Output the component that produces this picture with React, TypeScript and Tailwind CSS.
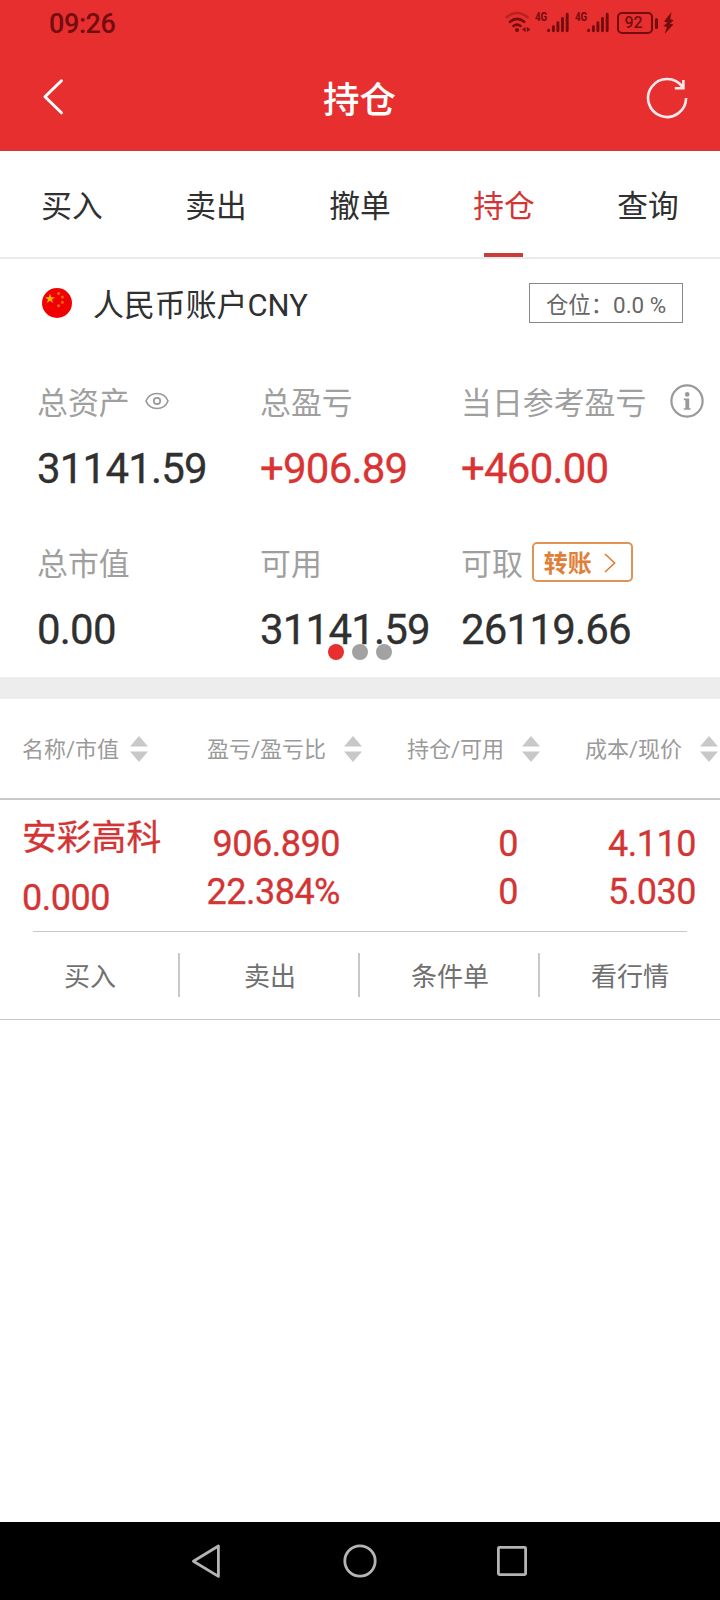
import React from 'react';

const tabs = ['买入', '卖出', '撤单', '持仓', '查询'];

const actions = ['买入', '卖出', '条件单', '看行情'];

const SignalIcon: React.FC = () => (
  <div className="relative h-6 w-[35px]">
    <span className="absolute -top-px left-0 origin-left scale-x-75 text-[13px] leading-[14px] font-bold">4G</span>
    <svg className="absolute left-3 top-0" width="23" height="24" viewBox="0 0 23 24" stroke="currentColor" strokeWidth="2.9" strokeLinecap="round">
      <path d="M1.6 19.2v.6M6.4 15.6v4.2M10.9 11.6v8.2M15.5 7.4v12.4M20.2 3.2v16.6" />
    </svg>
  </div>
);

const StatusBar: React.FC = () => (
  <div className="flex h-[46px] items-center justify-between pl-[49px] pr-[46px] text-[#750c0e]">
    <span className="pt-0.5 text-[27px] leading-[46px] font-medium tracking-[-0.4px]">09:26</span>
    <div className="flex items-center">
      {/* Wifi */}
      <svg width="30" height="24" viewBox="0 0 30 24" fill="none" stroke="currentColor" strokeWidth="2.6" strokeLinecap="round">
        <path d="M2.6 6.2Q13 -2.2 23.6 6.2" opacity="0.4" />
        <path d="M6 10.8Q13 5 20.2 10.8" />
        <path d="M9.4 15Q13 12.2 16.6 15" />
        <circle cx="13" cy="19" r="2" fill="currentColor" stroke="none" />
        <path d="M21.6 16v5l-3.6-2.5zM22.8 16v5l3.6-2.5z" fill="currentColor" stroke="none" />
      </svg>
      <div className="ml-[1px]">
        <SignalIcon />
      </div>
      <div className="ml-[5px]">
        <SignalIcon />
      </div>
      {/* Battery */}
      <div className="relative ml-[7px] flex h-[22px] w-[36px] items-center justify-center rounded-[5px] border-2 border-current text-[16px] leading-[18px] font-medium">
        <span className="-ml-[3px]">92</span>
      </div>
      <div className="ml-[2px] h-[11px] w-[3px] rounded-sm bg-current" />
      <svg className="ml-[5px]" width="11" height="24" viewBox="0 0 11 24" fill="currentColor">
        <path d="M8.5 1L1 10.4l3.4 1.4L0.4 15l3.4 1L1.6 23 10.4 13.6 7 12.4l3.6-3.2-3.4-1z" />
      </svg>
    </div>
  </div>
);

const Header: React.FC = () => (
  <div className="h-[151px] border-b border-[#cf3a3a] bg-[#e72f2f]">
    <StatusBar />
    <div className="flex h-[104px] items-center justify-between pl-[41px] pr-[31px] text-white">
      <svg width="24" height="40" viewBox="0 0 24 40" fill="none" stroke="currentColor" strokeWidth="3" strokeLinecap="round" strokeLinejoin="round">
        <path d="M20.4 2.6L4 18.6l16.4 16" transform="translate(0 .2)" />
      </svg>
      <h1 className="ml-[9px] pt-1.5 text-[36.5px] leading-[106px] font-medium">持仓</h1>
      <svg width="44" height="44" viewBox="0 0 44 44" fill="none" stroke="currentColor" strokeWidth="2.6" opacity="0.9">
        <path d="M41.1 22A19 19 0 1 1 37.6 11" />
        <path d="M38.4 4v8.2h-8.6" />
      </svg>
    </div>
  </div>
);

const Tabs: React.FC = () => (
  <div className="flex h-[108px] border-b-2 border-[#ebebeb] text-[30.7px]">
    {tabs.map((tab) => {
      const active = tab === '持仓';
      return (
        <div key={tab} className={`flex flex-1 flex-col items-center justify-between ${active ? 'text-[#d33434]' : 'text-[#303030]'}`}>
          <span className="h-[102px] leading-[112px]">{tab}</span>
          {active && <div className="mr-0.5 h-1 w-[39px] bg-[#c83c3c]" />}
        </div>
      );
    })}
  </div>
);

const FlagIcon: React.FC = () => (
  <svg width="30" height="30" viewBox="0 0 30 30">
    <circle cx="15" cy="15" r="15" fill="#f00000" />
    <path d="M8 5.6l1.2 3.6H13l-3 2.2 1.1 3.6L8 12.8 4.9 15 6 11.4 3 9.2h3.8z" fill="#ffb400" />
    <g fill="#f06a00">
      <circle cx="16.6" cy="5.6" r="1.5" />
      <circle cx="20.4" cy="9" r="1.5" />
      <circle cx="20.4" cy="14.2" r="1.5" />
      <circle cx="16.6" cy="17.8" r="1.5" />
    </g>
  </svg>
);

const EyeIcon: React.FC = () => (
  <svg className="ml-[15px]" width="24" height="18" viewBox="0 0 24 18" fill="none" stroke="#999" strokeWidth="1.7">
    <path d="M1 9C5 -1 19 -1 23 9C19 19 5 19 1 9z" />
    <circle cx="12" cy="9" r="3.2" />
  </svg>
);

const InfoIcon: React.FC = () => (
  <svg className="ml-6 shrink-0" width="34" height="34" viewBox="0 0 34 34">
    <circle cx="17" cy="17" r="15.6" fill="none" stroke="#999" strokeWidth="2.2" />
    <circle cx="17.2" cy="10.4" r="2.3" fill="#999" />
    <path d="M13.8 14.6h5.4v9.6h1.4v1.5h-6.8v-1.5h1.6v-8h-1.6z" fill="#999" />
  </svg>
);

const TransferButton: React.FC = () => (
  <button className="ml-[9px] flex h-10 w-[101px] items-center rounded-[5px] border-2 border-[#e09355] pl-[10px] text-[24px] leading-9 font-bold text-[#e08038]">
    <span className="pt-1">转账</span>
    <svg className="mt-0.5 ml-[12px]" width="12" height="20" viewBox="0 0 12 20" fill="none" stroke="currentColor" strokeWidth="1.7">
      <path d="M1 1l9.6 9L1 19" />
    </svg>
  </button>
);

interface StatProps {
  label: string;
  value: string;
  red?: boolean;
  children?: React.ReactNode;
}

const Stat: React.FC<StatProps> = ({ label, value, red, children }) => (
  <div>
    <div className="flex h-[42px] items-center whitespace-nowrap text-[30.9px] leading-[42px] text-[#9f9f9f]">
      <span className="pt-1.5">{label}</span>
      {children}
    </div>
    <div className={`mt-[23px] text-[42px] leading-[48px] tracking-[-0.8px] [-webkit-text-stroke:0.3px] ${red ? 'text-[#d93434]' : 'text-[#303030]'}`}>{value}</div>
  </div>
);

const Account: React.FC = () => (
  <div className="relative h-[418px]">
    <div className="flex h-16 items-center justify-between pt-6 pl-[42px] pr-[37px]">
      <div className="flex items-center text-[30.9px] leading-10 text-[#303030]">
        <FlagIcon />
        <span className="ml-[21px] pt-1.5">人民币账户CNY</span>
      </div>
      <div className="flex h-10 w-[154px] items-center justify-center border border-[#888] pt-[3px] text-[22.4px] leading-9 text-[#666]">
        <span>仓位：</span>
        <span>0.0 %</span>
      </div>
    </div>

    <div className="mt-[57px] grid grid-cols-[223px_201px_1fr] gap-y-[48px] pl-[37px]">
      <Stat label="总资产" value="31141.59">
        <EyeIcon />
      </Stat>
      <Stat label="总盈亏" value="+906.89" red />
      <Stat label="当日参考盈亏" value="+460.00" red>
        <InfoIcon />
      </Stat>
      <Stat label="总市值" value="0.00" />
      <Stat label="可用" value="31141.59" />
      <Stat label="可取" value="26119.66">
        <TransferButton />
      </Stat>
    </div>

    {/* Carousel dots */}
    <div className="absolute bottom-[17px] left-0 flex w-full justify-center gap-2">
      <div className="h-4 w-4 rounded-full bg-[#e72f2f]" />
      <div className="h-4 w-4 rounded-full bg-[#a2a2a2]" />
      <div className="h-4 w-4 rounded-full bg-[#a2a2a2]" />
    </div>
  </div>
);

const SortIcon: React.FC = () => (
  <svg width="18" height="26" viewBox="0 0 18 26" fill="#c8c8c8">
    <path d="M9 0l9 10.5H0zM9 26l9 -10.5H0z" />
  </svg>
);

const HeadCell: React.FC<{ label: string }> = ({ label }) => (
  <div className="flex items-center justify-between whitespace-nowrap">
    <span className="pt-0.5 leading-8">{label}</span>
    <SortIcon />
  </div>
);

const Holdings: React.FC = () => (
  <div>
    <div className="flex h-[101px] items-center border-b-2 border-[#c8c8c8] pl-[22px] text-[22px] text-[#9a9a9a]">
      <div className="w-[126px]"><HeadCell label="名称/市值" /></div>
      <div className="ml-[59px] w-[155px]"><HeadCell label="盈亏/盈亏比" /></div>
      <div className="ml-[45px] w-[133px]"><HeadCell label="持仓/可用" /></div>
      <div className="ml-[45px] w-[133px]"><HeadCell label="成本/现价" /></div>
    </div>

    <div className="flex h-[131px] pl-[22px] text-[36px] leading-[48px] tracking-[-0.5px] text-[#d33434] [-webkit-text-stroke:0.3px]">
      <div className="w-[160px] pt-[14px]">
        <div className="pt-px text-[34.8px] leading-[47px] tracking-normal">安彩高科</div>
        <div className="mt-3">0.000</div>
      </div>
      <div className="w-[158px] pt-5 text-right">
        <div>906.890</div>
        <div>22.384%</div>
      </div>
      <div className="w-[178px] pt-5 text-right">
        <div>0</div>
        <div>0</div>
      </div>
      <div className="w-[178px] pt-5 text-right">
        <div>4.110</div>
        <div>5.030</div>
      </div>
    </div>

    <div className="mx-[33px] h-px bg-[#c8c8c8]" />
    <div className="flex h-[88px] items-center border-b border-[#c8c8c8] pb-0.5 text-[26px] text-[#707070]">
      {actions.map((action, i) => (
        <div
          key={action}
          className={`h-11 w-[180px] text-center leading-[49px] ${i < actions.length - 1 ? 'border-r-2 border-[#c8c8c8] pl-0.5' : ''}`}
        >
          {action}
        </div>
      ))}
    </div>
  </div>
);

const NavBar: React.FC = () => (
  <div className="mt-auto flex h-[78px] items-center justify-center gap-[118px] bg-black">
    <svg width="34" height="40" viewBox="0 0 34 40" fill="none" stroke="#b4b4b4" strokeWidth="2.8" strokeLinejoin="round">
      <path d="M27.4 5v30.4L2.4 20.2z" />
    </svg>
    <svg width="34" height="40" viewBox="0 0 34 40" fill="none" stroke="#b4b4b4" strokeWidth="2.8">
      <circle cx="17" cy="20" r="15.2" />
    </svg>
    <svg width="34" height="40" viewBox="0 0 34 40" fill="none" stroke="#b4b4b4" strokeWidth="2.8">
      <rect x="3.4" y="6.4" width="27.2" height="27.2" rx="1" />
    </svg>
  </div>
);

const App: React.FC = () => {
  return (
    <div className="flex h-[1600px] w-[720px] flex-col overflow-hidden bg-white font-['Roboto','Noto_Sans_CJK_SC',sans-serif]">
      <Header />
      <Tabs />
      <Account />
      <div className="h-[22px] bg-[#ededed]" />
      <Holdings />
      <NavBar />
    </div>
  );
};

export default App;
